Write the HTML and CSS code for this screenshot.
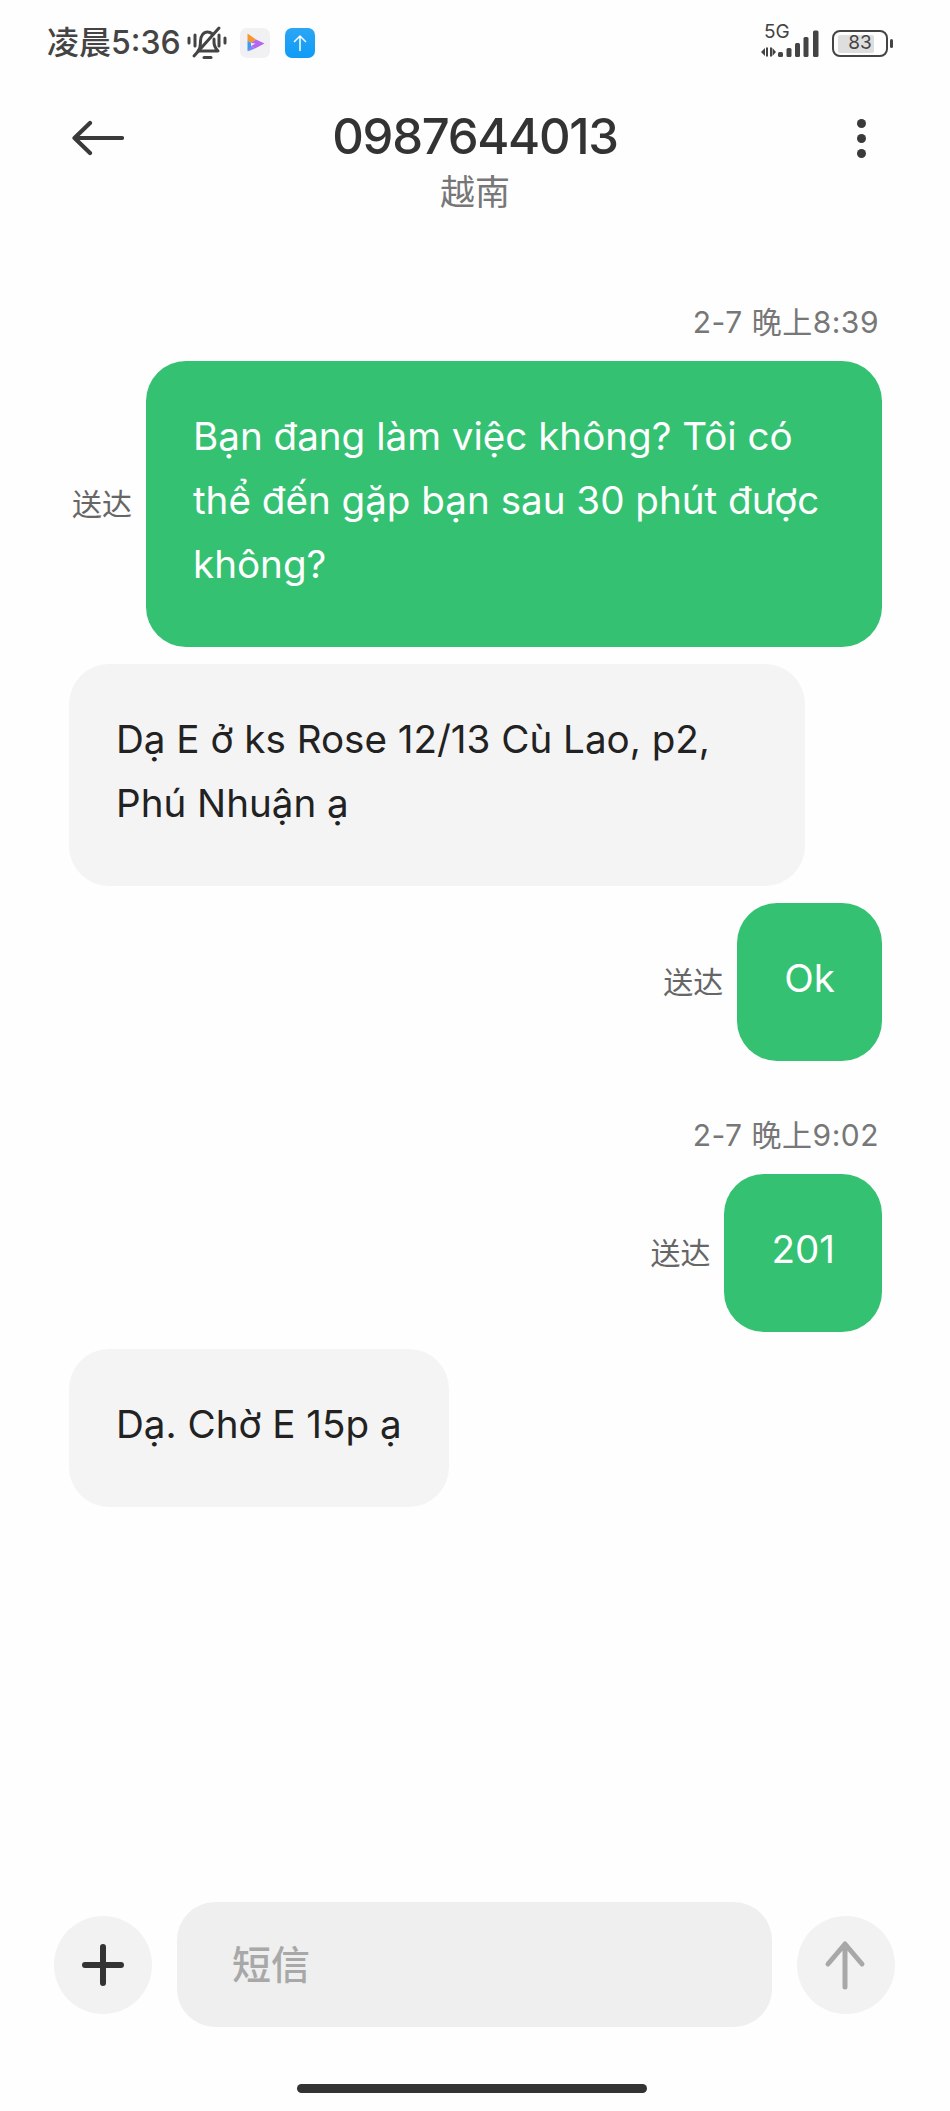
FILE: index.html
```html
<!DOCTYPE html>
<html lang="vi">
<head>
    <meta charset="UTF-8">
    <meta name="viewport" content="width=device-width, initial-scale=1.0">
    <title>0987644013</title>
    <link rel="stylesheet" href="styles.css">
</head>
<body>
    <div class="status_bar">
        <div class="status_left">
            <span class="status_time">凌晨5:36</span>
            <svg class="status_bell" width="40" height="36" viewBox="0 0 40 36" fill="none" stroke="#444" stroke-width="3" stroke-linecap="round" stroke-linejoin="round">
                <path d="M2 13v5M8 10v11M32 10v11M38 13v5"/>
                <path d="M11 26c2-2 2.500-4 2.500-10c0-5 3-9 7-9c2 0 3.500 .7 5 2"/>
                <path d="M27 14v3c0 4 1 6 4 9H12"/>
                <path d="M7 31L32 3"/>
                <path d="M17 32.500h7"/>
            </svg>
            <svg class="status_app" width="30" height="30" viewBox="0 0 30 30">
                <rect width="30" height="30" rx="7" fill="#f1f1f3"/>
                <path d="M7.500 5.500L16 11.500L11 15L7.500 12.500Z" fill="#f7962a"/>
                <path d="M7.500 12.500L11 15V20L7.500 23Z" fill="#3d9cf2"/>
                <path d="M16 11.500L24.500 15.500L15 20.500L11 18L15.500 15.500L11 15Z" fill="#b565ee"/>
                <path d="M7.500 23.500L11 18L15 20.500Z" fill="#7f86f2"/>
            </svg>
            <svg class="status_app" width="30" height="30" viewBox="0 0 30 30">
                <defs>
                    <linearGradient id="upload_blue" x1="0" y1="0" x2="0" y2="1">
                        <stop offset="0" stop-color="#2ba6f5"/>
                        <stop offset="1" stop-color="#0f9bf5"/>
                    </linearGradient>
                </defs>
                <rect width="30" height="30" rx="7" fill="url(#upload_blue)"/>
                <path d="M15 22.500V8M9.500 13.500L15 8L20.500 13.500" fill="none" stroke="#fff" stroke-width="1.500" stroke-linecap="round" stroke-linejoin="round"/>
            </svg>
        </div>
        <div class="status_right">
            <div class="status_signal">
                <span class="status_5g">5G</span>
                <svg width="60" height="28" viewBox="0 0 60 28" fill="#444">
                    <path d="M0 23l4-4v8zM5 18.500h2v9H5zM9 18.500h2v9H9zM11.500 19l3.500 4l-3.500 4z"/>
                    <rect x="17" y="23" width="5" height="5" rx="1.500"/>
                    <rect x="25.500" y="19" width="5" height="9" rx="1.500"/>
                    <rect x="34" y="14" width="5" height="14" rx="1.500"/>
                    <rect x="42.500" y="8" width="5" height="20" rx="1.500"/>
                    <rect x="52" y="1.500" width="5.500" height="26.500" rx="1.500"/>
                </svg>
            </div>
            <div class="status_battery">
                <div class="status_battery_fill"></div>
                <span class="status_battery_num">83</span>
            </div>
            <div class="status_battery_cap"></div>
        </div>
    </div>

    <header class="top_bar">
        <svg class="top_back" width="52" height="36" viewBox="0 0 52 36" fill="none" stroke="#3a3a3a" stroke-width="4.200" stroke-linecap="round" stroke-linejoin="round">
            <path d="M50 18H3M18 3L2.500 18L18 33"/>
        </svg>
        <div class="top_title">
            <div class="top_number">0987644013</div>
            <div class="top_country">越南</div>
        </div>
        <div class="top_more">
            <span class="top_dot"></span>
            <span class="top_dot"></span>
            <span class="top_dot"></span>
        </div>
    </header>

    <main class="thread">
        <div class="thread_time">2-7 晚上8:39</div>
        <div class="msg_row msg_row_out">
            <span class="msg_state">送达</span>
            <div class="bubble bubble_out bubble_wide">Bạn đang làm việc không? Tôi có<br>thể đến gặp bạn sau 30 phút được<br>không?</div>
        </div>
        <div class="msg_row">
            <div class="bubble bubble_in bubble_wide">Dạ E ở ks Rose 12/13 Cù Lao, p2,<br>Phú Nhuận ạ</div>
        </div>
        <div class="msg_row msg_row_out">
            <span class="msg_state">送达</span>
            <div class="bubble bubble_out">Ok</div>
        </div>
        <div class="thread_time thread_time_later">2-7 晚上9:02</div>
        <div class="msg_row msg_row_out">
            <span class="msg_state">送达</span>
            <div class="bubble bubble_out">201</div>
        </div>
        <div class="msg_row">
            <div class="bubble bubble_in">Dạ. Chờ E 15p ạ</div>
        </div>
    </main>

    <footer class="composer">
        <button class="round_btn">
            <svg width="44" height="44" viewBox="0 0 44 44" fill="none" stroke="#333" stroke-width="6" stroke-linecap="round">
                <path d="M22 4V40M4 22H40"/>
            </svg>
        </button>
        <div class="composer_input">短信</div>
        <button class="round_btn">
            <svg class="round_btn_up" width="42" height="50" viewBox="0 0 42 50" fill="none" stroke="#a8a8a8" stroke-width="5" stroke-linecap="round" stroke-linejoin="round">
                <path d="M21 47V4M4 24L21 4L38 24"/>
            </svg>
        </button>
    </footer>
    <div class="home_wrap">
        <div class="home_bar"></div>
    </div>
</body>
</html>
```

FILE: styles.css
```css
* {
    margin: 0;
    padding: 0;
    box-sizing: border-box;
}

html, body {
    height: 100%;
}

body {
    font-family: Inter, "Noto Sans CJK SC", sans-serif;
    background: #fefefe;
    color: #333;
    display: flex;
    flex-direction: column;
    overflow: hidden;
}

/* status bar */
.status_bar {
    height: 86px;
    padding: 26px 57px 0 47px;
    display: flex;
    justify-content: space-between;
    align-items: flex-start;
}

.status_left {
    display: flex;
    align-items: center;
    height: 34px;
}

.status_time {
    font-size: 32px;
    line-height: 34px;
    font-weight: 500;
    color: #444;
    margin-right: 6px;
}

.status_bell {
    margin-right: 13px;
}

.status_app {
    margin-right: 15px;
}

.status_right {
    display: flex;
    align-items: flex-start;
    height: 34px;
}

.status_signal {
    position: relative;
    width: 60px;
    height: 28px;
    margin-right: 11px;
    margin-top: 3px;
}

.status_5g {
    position: absolute;
    left: 3px;
    top: -6px;
    font-size: 19px;
    line-height: 18px;
    color: #444;
}

.status_battery {
    position: relative;
    width: 56px;
    height: 27px;
    border: 2.500px solid #444;
    border-radius: 8px;
    margin-top: 4px;
}

.status_battery_fill {
    position: absolute;
    left: 4px;
    top: 2.500px;
    bottom: 2.500px;
    width: 36px;
    background: #dedede;
    border-radius: 2px;
}

.status_battery_num {
    position: relative;
    display: block;
    text-align: center;
    font-size: 19px;
    line-height: 22px;
    color: #444;
}

.status_battery_cap {
    width: 3.500px;
    height: 9px;
    margin-left: 1.500px;
    margin-top: 13px;
    background: #444;
    border-radius: 2px;
}

/* name row */
.top_bar {
    position: relative;
    height: 218px;
    text-align: center;
}

.top_back {
    position: absolute;
    left: 72px;
    top: 34px;
}

.top_number {
    font-size: 49px;
    font-weight: 500;
    letter-spacing: -1.300px;
    line-height: 60px;
    padding-top: 21px;
    color: #333;
}

.top_country {
    font-size: 35px;
    line-height: 44px;
    margin-top: 3px;
    color: #777;
}

.top_more {
    position: absolute;
    left: 857px;
    top: 33px;
    display: flex;
    flex-direction: column;
    gap: 6px;
}

.top_dot {
    width: 9px;
    height: 9px;
    border-radius: 50%;
    background: #3a3a3a;
}

/* messages */
.thread {
    flex: 1;
    padding: 0 68px 0 69px;
}

.thread_time {
    text-align: right;
    font-size: 30px;
    letter-spacing: 0.500px;
    line-height: 36px;
    color: #777;
    padding-right: 3px;
    margin-bottom: 21px;
}

.thread_time_later {
    margin-top: 56px;
}

.msg_row {
    display: flex;
    align-items: center;
    margin-bottom: 17px;
}

.msg_row_out {
    justify-content: flex-end;
}

.msg_state {
    font-size: 30px;
    line-height: 40px;
    color: #666;
    margin-right: 14px;
}

.bubble {
    font-size: 38.600px;
    line-height: 64px;
    padding: 43px 47px 51px;
    border-radius: 40px;
    white-space: nowrap;
}

.bubble_wide {
    width: 736px;
}

.bubble_out {
    background: #34c172;
    color: #fff;
}

.bubble_in {
    background: #f4f4f4;
    color: #222;
}

/* bottom input */
.composer {
    height: 125px;
    padding: 0 55px 0 54px;
    display: flex;
    align-items: center;
    gap: 25px;
    margin-bottom: 57px;
}

.round_btn {
    flex: none;
    width: 98px;
    height: 98px;
    border: none;
    border-radius: 50%;
    background: #f2f2f2;
    display: flex;
    align-items: center;
    justify-content: center;
}

.round_btn_up {
    margin-right: 3px;
}

.composer_input {
    flex: 1;
    height: 125px;
    border-radius: 38px;
    background: #efefef;
    color: #a8a8a8;
    font-size: 39px;
    font-weight: 500;
    line-height: 125px;
    padding-left: 55px;
}

.home_wrap {
    height: 27px;
    flex: none;
}

.home_bar {
    width: 350px;
    height: 9px;
    margin-left: 297px;
    border-radius: 5px;
    background: #333;
}
```
